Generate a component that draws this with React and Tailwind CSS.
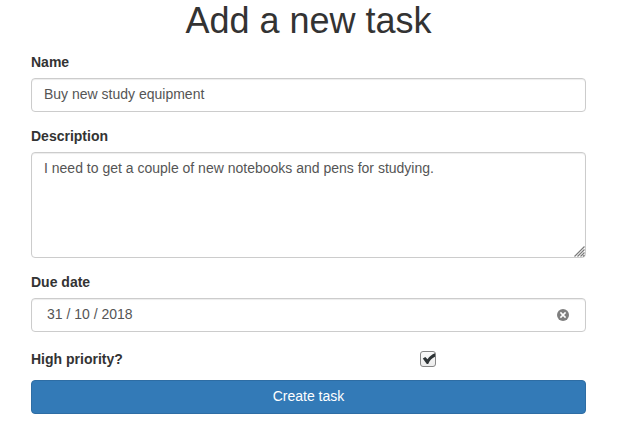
import { useState } from "react";

const labelClass = "block text-sm font-bold leading-[18px] text-[#333333]";
const fieldClass =
  "block w-full rounded border border-[#cccccc] bg-white px-3 pt-[5px] pb-[7px] text-sm leading-5 text-[#555555] shadow-[inset_0_1px_1px_rgba(0,0,0,0.075)] outline-none focus:border-[#66afe9]";

function Field({ id, label, children }) {
  return (
    <div className="flex flex-col gap-[7px]">
      <label htmlFor={id} className={labelClass}>
        {label}
      </label>
      {children}
    </div>
  );
}

function ResizeGrip() {
  return (
    <svg
      className="pointer-events-none absolute right-px bottom-px h-[11px] w-[11px]"
      viewBox="0 0 11 11"
      fill="none"
      stroke="#7a7a7a"
      strokeWidth="1.2"
      aria-hidden="true"
    >
      <path d="M0.5 10.5 10.5 0.5M3.5 10.5 10.5 3.5M6.5 10.5 10.5 6.5M9 10.5 10.5 9" />
    </svg>
  );
}

export default function App() {
  const [name, setName] = useState("Buy new study equipment");
  const [description, setDescription] = useState(
    "I need to get a couple of new notebooks and pens for studying."
  );
  const [dueDate, setDueDate] = useState("31 / 10 / 2018");
  const [highPriority, setHighPriority] = useState(true);

  return (
    <main className="bg-white pr-[35px] pb-6 pl-[31px] font-['Liberation_Sans',Arial,sans-serif] text-[#333333]">
      <h1 className="text-center text-4xl leading-[42px] font-normal">Add a new task</h1>
      <form className="mt-[11px]" onSubmit={(event) => event.preventDefault()}>
        <div className="flex flex-col gap-[15px]">
          <Field id="name" label="Name">
            <input
              id="name"
              type="text"
              className={fieldClass}
              value={name}
              onChange={(event) => setName(event.target.value)}
            />
          </Field>
          <Field id="description" label="Description">
            <div className="relative">
              <textarea
                id="description"
                className={`${fieldClass} h-[106px] resize-none`}
                value={description}
                onChange={(event) => setDescription(event.target.value)}
              />
              <ResizeGrip />
            </div>
          </Field>
          <Field id="due-date" label="Due date">
            <div className="flex items-center rounded border border-[#cccccc] pr-4 pl-[15px] shadow-[inset_0_1px_1px_rgba(0,0,0,0.075)]">
              <input
                id="due-date"
                type="text"
                className="min-w-0 flex-1 bg-transparent pt-[5px] pb-[7px] text-sm leading-5 text-[#555555] outline-none"
                value={dueDate}
                onChange={(event) => setDueDate(event.target.value)}
              />
              <button type="button" aria-label="Clear due date" onClick={() => setDueDate("")}>
                <svg className="h-3 w-3" viewBox="0 0 12 12" aria-hidden="true">
                  <circle cx="6" cy="6" r="6" fill="#7f7f7f" />
                  <path d="M3.4 3.4 8.6 8.6M8.6 3.4 3.4 8.6" stroke="#ffffff" strokeWidth="1.5" />
                </svg>
              </button>
            </div>
          </Field>
        </div>
        <div className="mt-[18px] flex items-center">
          <label htmlFor="priority" className={`${labelClass} w-[43%]`}>
            High priority?
          </label>
          <div className="flex flex-1 justify-center">
            <span className="relative h-4 w-4">
              <input
                id="priority"
                type="checkbox"
                className="peer block h-4 w-4 appearance-none rounded-[3px] border border-[#868686] bg-linear-to-b from-[#fafafa] to-[#ececec]"
                checked={highPriority}
                onChange={(event) => setHighPriority(event.target.checked)}
              />
              <svg
                className="pointer-events-none invisible absolute inset-0 h-4 w-4 peer-checked:visible"
                viewBox="0 0 16 16"
                aria-hidden="true"
              >
                <path
                  d="M2.8 7.5 5.3 6 7.5 8.2C9.4 5.5 11.8 3.3 15 2.2V5.8C11.9 7.2 9.7 9.6 8.2 13H6.8Z"
                  fill="#2e3436"
                />
              </svg>
            </span>
          </div>
        </div>
        <button
          type="submit"
          className="mt-3 block w-full rounded border border-[#2e6da4] bg-[#337ab7] px-3 pt-[5px] pb-[7px] text-center text-sm leading-5 text-white"
        >
          Create task
        </button>
      </form>
    </main>
  );
}
